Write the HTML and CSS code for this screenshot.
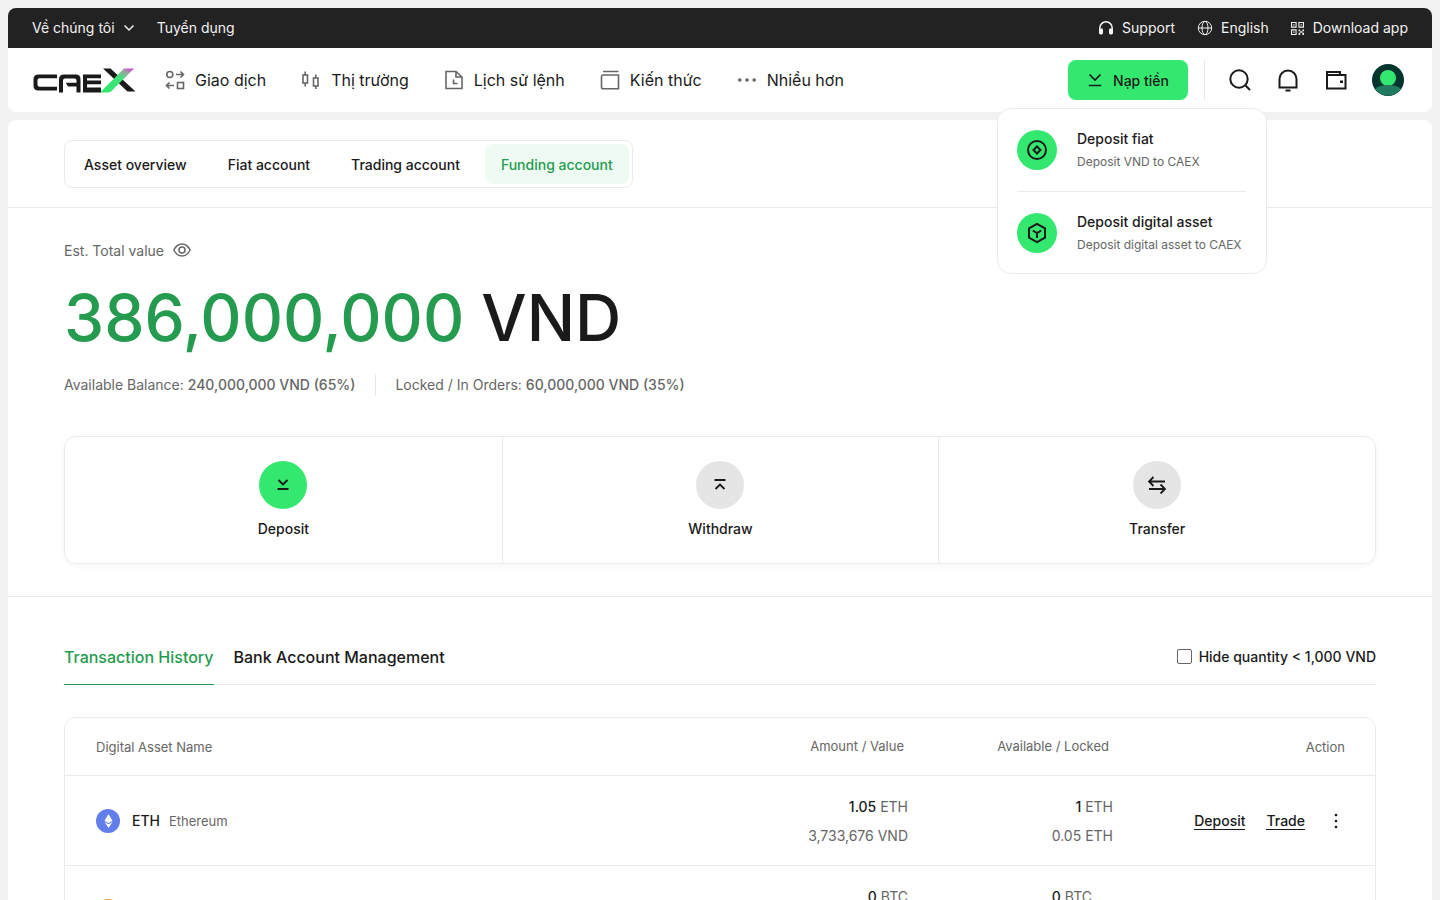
FILE: index.html
```html
<!DOCTYPE html>
<html lang="en">
<head>
    <meta charset="UTF-8">
    <meta name="viewport" content="width=device-width, initial-scale=1.0">
    <title>CAEX - Funding account</title>
    <link rel="stylesheet" href="styles.css">
</head>
<body>
    <header class="site-header">
        <div class="topbar">
            <div class="topbar-group">
                <a class="topbar-link">Về chúng tôi
                    <svg class="chevron" viewBox="0 0 12 12"><path d="M1.5 3.5 6 8l4.5-4.5"/></svg>
                </a>
                <a class="topbar-link">Tuyển dụng</a>
            </div>
            <div class="topbar-group">
                <a class="topbar-link">
                    <svg class="topbar-icon" viewBox="0 0 16 16"><path class="line" d="M1.8 10V8a6.2 6.2 0 0 1 12.4 0v2"/><rect class="solid" x="1" y="8.5" width="4" height="6" rx="1.4"/><rect class="solid" x="11" y="8.5" width="4" height="6" rx="1.4"/></svg>
                    Support
                </a>
                <a class="topbar-link">
                    <svg class="topbar-icon" viewBox="0 0 16 16"><circle class="line-thin" cx="8" cy="8" r="6.7"/><ellipse class="line-thin" cx="8" cy="8" rx="3" ry="6.7"/><path class="line-thin" d="M1.3 8h13.4"/></svg>
                    English
                </a>
                <a class="topbar-link">
                    <svg class="topbar-icon small" viewBox="0 0 12 12"><path class="line-thin" d="M.5.5h4.2v4.2H.5zM7.3.5h4.2v4.2H7.3zM.5 7.3h4.2v4.2H.5z"/><path class="solid" d="M2 2h1.2v1.2H2zM8.8 2H10v1.2H8.8zM2 8.800h1.200V10H2zM7 7h1.500v1.500H7zM10.500 7H12v1.500h-1.500zM8.500 8.500H10.500V10H8.500zM7 10h1.500v2H7zM10.500 10H12v2h-1.500z"/></svg>
                    Download app
                </a>
            </div>
        </div>
        <nav class="navbar">
            <svg class="logo" viewBox="0 0 104 24">
                <defs>
                    <linearGradient id="logoGrad" x1="0" y1="1" x2="1" y2="0">
                        <stop offset="0" stop-color="#2fe86e"/>
                        <stop offset="0.6" stop-color="#3fe37a"/>
                        <stop offset="0.8" stop-color="#9aa59f"/>
                        <stop offset="1" stop-color="#e02bea"/>
                    </linearGradient>
                </defs>
                <path class="logo-dark" d="M25 6H6.500Q1.500 6 1.500 11v6q0 5 5 5H25v-3.800H7.500q-2 0-2-2v-4.400q0-2 2-2H25zM27 24V11q0-5 5-5h12q4.500 0 4.500 5v13h-4V18H36l-2.200-3.800H44.500V12q0-2-2-2H33q-2 0-2 2v12zM51 6h18v3.800H55V12h14v3.800H55V19h14v5H51z"/>
                <path class="logo-dark" d="M72 1h7.500l25 23h-8z" transform="translate(-1 -1)"/>
                <path fill="url(#logoGrad)" d="M68 24l11-11c2-2 3.500-3 5-5l8-8h10L84 18c-3 3-5 6-8 6z"/>
            </svg>
            <div class="nav-items">
                <a class="nav-item">
                    <svg class="nav-icon" viewBox="0 0 20 20"><circle cx="4.800" cy="4.500" r="3"/><path d="M11 4.500h7.500M15.500 1.500l3 3-3 3M9 15.500H1.500M4.500 12.500l-3 3 3 3"/><rect x="12.500" y="12.500" width="6" height="6"/></svg>
                    Giao dịch
                </a>
                <a class="nav-item">
                    <svg class="nav-icon" viewBox="0 0 20 20"><rect x="2" y="5" width="4.500" height="8"/><rect x="12.500" y="8" width="4.500" height="8"/><path d="M4.200 1.500V5M4.200 13v3.500M14.800 4.500V8M14.800 16v3"/></svg>
                    Thị trường
                </a>
                <a class="nav-item">
                    <svg class="nav-icon" viewBox="0 0 20 20"><path d="M2 1.500h10l6 5.500v11.500H2zM12 1.500V7h6M9.500 9.500v4h4"/></svg>
                    Lịch sử lệnh
                </a>
                <a class="nav-item">
                    <svg class="nav-icon" viewBox="0 0 20 20"><path d="M3 1.500h15.500M1.500 6.500v10.500q0 1.800 1.800 1.800H18.500V5H3.200q-1.700 0-1.700 1.500z"/></svg>
                    Kiến thức
                </a>
                <a class="nav-item">
                    <svg class="nav-icon" viewBox="0 0 20 20"><circle class="dot" cx="2.800" cy="10" r="1.800"/><circle class="dot" cx="10" cy="10" r="1.800"/><circle class="dot" cx="17.200" cy="10" r="1.800"/></svg>
                    Nhiều hơn
                </a>
            </div>
            <div class="nav-right">
                <button class="deposit-btn">
                    <svg viewBox="0 0 16 16"><path d="M2.500 2.500 8 8l5.500-5.500M1.800 13.500h12.400"/></svg>
                    Nạp tiền
                </button>
                <span class="nav-divider"></span>
                <div class="nav-tools">
                    <svg class="tool-icon" viewBox="0 0 24 24"><circle cx="11" cy="11" r="8.700"/><path d="M17.500 17.500 22 22"/></svg>
                    <svg class="tool-icon" viewBox="0 0 24 24"><path d="M3.500 19.500h17V11a8.500 8.500 0 0 0-17 0zM9.500 22.500h5" /></svg>
                    <svg class="tool-icon" viewBox="0 0 24 24"><path d="M3 7V4h13v3M3 7h18.500v13.500H3zM3 7V4"/><path class="tool-solid" d="M16 12.500h3V15h-3z"/></svg>
                    <svg class="avatar" viewBox="0 0 32 32"><circle cx="16" cy="16" r="16" fill="#02352e"/><circle cx="16" cy="14" r="8" fill="#34e76f"/><path d="M3 25q4-4 13-4t13 4a16 16 0 0 1-26 0z" fill="#217a60"/></svg>
                </div>
            </div>
        </nav>
        <div class="deposit-menu">
            <div class="menu-item">
                <span class="menu-icon">
                    <svg viewBox="0 0 24 24"><circle cx="12" cy="12" r="9"/><path d="M12 8.500l3.500 3.500-3.500 3.500L8.500 12z"/></svg>
                </span>
                <div>
                    <div class="menu-title">Deposit fiat</div>
                    <div class="menu-sub">Deposit VND to CAEX</div>
                </div>
            </div>
            <div class="menu-item">
                <span class="menu-icon">
                    <svg viewBox="0 0 24 24"><path d="M12 2.800l8 4.600v9.200l-8 4.600-8-4.600V7.400zM7.800 9.500 12 12l4.200-2.500M12 12v5"/></svg>
                </span>
                <div>
                    <div class="menu-title">Deposit digital asset</div>
                    <div class="menu-sub">Deposit digital asset to CAEX</div>
                </div>
            </div>
        </div>
    </header>

    <main class="content">
        <section class="account-tabs-wrap">
            <div class="account-tabs">
                <a class="account-tab">Asset overview</a>
                <a class="account-tab">Fiat account</a>
                <a class="account-tab">Trading account</a>
                <a class="account-tab active">Funding account</a>
            </div>
        </section>

        <section class="summary">
            <div class="est-label">Est. Total value
                <svg viewBox="0 0 18 18"><path d="M.8 9C2.800 5.200 5.500 3 9 3s6.200 2.200 8.200 6c-2 3.800-4.700 6-8.200 6S2.800 12.800.8 9z"/><circle cx="9" cy="9" r="3"/></svg>
            </div>
            <div class="total"><span class="total-num">386,000,000</span> VND</div>
            <div class="balances">
                <span class="balance">Available Balance: <b>240,000,000 VND (65%)</b></span>
                <span class="balance">Locked / In Orders: <b>60,000,000 VND (35%)</b></span>
            </div>
            <div class="actions">
                <a class="action">
                    <span class="action-circle green"><svg viewBox="0 0 16 16"><path d="M3.500 3 8 7.500 12.500 3M2.500 12h11"/></svg></span>
                    Deposit
                </a>
                <a class="action">
                    <span class="action-circle"><svg viewBox="0 0 16 16"><path d="M2.500 3h11M3.500 12 8 7.500l4.500 4.500"/></svg></span>
                    Withdraw
                </a>
                <a class="action">
                    <span class="action-circle"><svg class="wide" viewBox="0 0 20 20"><path d="M2 6.500h16M6.500 2 2 6.500 6.500 11M18 14H2M13.500 9.500 18 14l-4.500 4.500"/></svg></span>
                    Transfer
                </a>
            </div>
        </section>

        <section class="assets">
            <div class="asset-tabs">
                <a class="asset-tab active">Transaction History</a>
                <a class="asset-tab">Bank Account Management</a>
                <label class="hide-small"><span class="checkbox"></span>Hide quantity &lt; 1,000 VND</label>
            </div>
            <div class="asset-table">
                <div class="table-row table-head">
                    <span>Digital Asset Name</span>
                    <span class="cell-num">Amount / Value</span>
                    <span class="cell-num">Available / Locked</span>
                    <span class="cell-action">Action</span>
                </div>
                <div class="table-row">
                    <div class="asset-name">
                        <span class="coin eth">
                            <svg viewBox="0 0 10 16"><path d="M5 0l4.500 7.800L5 10.500.5 7.800z"/><path d="M5 11.800l4.500-2.700L5 16 .5 9.100z"/></svg>
                        </span>
                        <b>ETH</b><span class="asset-full">Ethereum</span>
                    </div>
                    <div class="cell-num"><p><b>1.05</b> ETH</p><p>3,733,676 VND</p></div>
                    <div class="cell-num"><p><b>1</b> ETH</p><p>0.05 ETH</p></div>
                    <div class="row-actions">
                        <a>Deposit</a>
                        <a>Trade</a>
                        <svg class="kebab" viewBox="0 0 4 16"><circle cx="2" cy="2" r="1.300"/><circle cx="2" cy="8" r="1.300"/><circle cx="2" cy="14" r="1.300"/></svg>
                    </div>
                </div>
                <div class="table-row">
                    <div class="asset-name">
                        <span class="coin btc"></span>
                        <b>BTC</b><span class="asset-full">Bitcoin</span>
                    </div>
                    <div class="cell-num"><p><b>0</b> BTC</p><p>0 VND</p></div>
                    <div class="cell-num shifted"><p><b>0</b> BTC</p><p>0 BTC</p></div>
                    <div class="row-actions">
                        <a>Deposit</a>
                        <a>Trade</a>
                        <svg class="kebab" viewBox="0 0 4 16"><circle cx="2" cy="2" r="1.300"/><circle cx="2" cy="8" r="1.300"/><circle cx="2" cy="14" r="1.300"/></svg>
                    </div>
                </div>
            </div>
        </section>
    </main>
</body>
</html>
```

FILE: styles.css
```css
* {
    box-sizing: border-box;
}
html, body {
    height: 900px;
    overflow: hidden;
}
body {
    margin: 0;
    padding: 8px 8px 0;
    background-color: #f2f2f2;
    color: #1a1a1a;
    font-family: Inter, "Noto Sans", sans-serif;
    font-size: 14px;
}
p {
    margin: 0;
}
b {
    font-weight: 500;
}

/* header */
.site-header {
    position: relative;
}
.topbar {
    height: 40px;
    padding: 0 24px;
    display: flex;
    justify-content: space-between;
    align-items: center;
    background-color: #222;
    border-radius: 8px 8px 0 0;
    color: #f2f2f2;
}
.topbar-group {
    display: flex;
    gap: 22px;
}
.topbar-link {
    display: flex;
    align-items: center;
    gap: 8px;
    line-height: 20px;
}
.chevron {
    width: 12px;
    height: 12px;
    fill: none;
    stroke: #f2f2f2;
    stroke-width: 1.5;
}
.topbar-icon {
    width: 16px;
    height: 16px;
}
.topbar-icon.small {
    width: 13px;
    height: 13px;
    margin-right: 1px;
}
.line, .line-thin {
    fill: none;
    stroke: #f2f2f2;
    stroke-width: 1.500;
}
.line-thin {
    stroke-width: 1;
}
.solid {
    fill: #f2f2f2;
}
.navbar {
    height: 64px;
    padding: 0 28px 0 24px;
    display: flex;
    align-items: center;
    background-color: #fff;
    border-radius: 0 0 8px 8px;
}
.logo {
    width: 104px;
    height: 25px;
    flex: none;
}
.logo-dark {
    fill: #1a1a1a;
}
.nav-items {
    margin-left: 29px;
    display: flex;
    gap: 35px;
}
.nav-item {
    display: flex;
    align-items: center;
    gap: 10px;
    font-size: 16px;
    line-height: 24px;
}
.nav-icon {
    width: 20px;
    height: 20px;
    fill: none;
    stroke: #666;
    stroke-width: 1.600;
}
.nav-icon .dot {
    fill: #666;
    stroke: none;
}
.nav-right {
    margin-left: auto;
    display: flex;
    align-items: center;
}
.deposit-btn {
    width: 120px;
    height: 40px;
    display: flex;
    justify-content: center;
    align-items: center;
    gap: 10px;
    border: none;
    border-radius: 8px;
    background-color: #34e76f;
    color: #1a1a1a;
    font-family: inherit;
    font-size: 14px;
    font-weight: 500;
}
.deposit-btn svg {
    width: 16px;
    height: 16px;
    fill: none;
    stroke: #1a1a1a;
    stroke-width: 1.700;
}
.nav-divider {
    width: 1px;
    height: 40px;
    margin: 0 23px 0 16px;
    background-color: #e6e6e6;
}
.nav-tools {
    display: flex;
    align-items: center;
    gap: 24px;
}
.tool-icon {
    width: 24px;
    height: 24px;
    fill: none;
    stroke: #1a1a1a;
    stroke-width: 2;
}
.tool-icon .tool-solid {
    fill: #1a1a1a;
    stroke: none;
}
.avatar {
    width: 32px;
    height: 32px;
    margin-left: 0;
}

/* deposit dropdown */
.deposit-menu {
    position: absolute;
    top: 100px;
    left: 989px;
    width: 270px;
    height: 166px;
    padding: 0 20px 0 19px;
    background-color: #fff;
    border: 1px solid #ebebeb;
    border-radius: 14px;
    z-index: 10;
}
.menu-item {
    height: 82px;
    display: flex;
    align-items: center;
    gap: 20px;
}
.menu-item + .menu-item {
    border-top: 1px solid #ebebeb;
}
.menu-icon {
    width: 40px;
    height: 40px;
    flex: none;
    display: flex;
    justify-content: center;
    align-items: center;
    border-radius: 50%;
    background-color: #34e76f;
}
.menu-icon svg {
    width: 24px;
    height: 24px;
    fill: none;
    stroke: #1a1a1a;
    stroke-width: 2;
}
.menu-title {
    font-weight: 500;
    line-height: 20px;
}
.menu-sub {
    margin-top: 4px;
    font-size: 12px;
    line-height: 18px;
    color: #666;
}

/* main */
.content {
    margin-top: 8px;
    height: 800px;
    background-color: #fff;
    border-radius: 8px 8px 0 0;
}
.account-tabs-wrap {
    padding: 20px 56px 19px;
    border-bottom: 1px solid #ebebeb;
}
.account-tabs {
    width: max-content;
    height: 48px;
    padding: 3px;
    display: flex;
    align-items: center;
    gap: 9px;
    border: 1px solid #ebebeb;
    border-radius: 8px;
}
.account-tab {
    height: 40px;
    padding: 0 16px;
    display: flex;
    align-items: center;
    font-weight: 500;
    border-radius: 8px;
}
.account-tab.active {
    background-color: #eefbf2;
    color: #259b4f;
}
.summary {
    padding: 32px 56px;
    border-bottom: 1px solid #ebebeb;
}
.est-label {
    display: flex;
    align-items: center;
    gap: 9px;
    height: 20px;
    color: #666;
}
.est-label svg {
    width: 18px;
    height: 18px;
    fill: none;
    stroke: #666;
    stroke-width: 1.500;
}
.total {
    margin-top: 26px;
    font-size: 64px;
    line-height: 64px;
    font-weight: 500;
    color: #1a1a1a;
}
.total-num {
    color: #259b4f;
}
.balances {
    margin-top: 24px;
    display: flex;
    align-items: center;
}
.balance {
    line-height: 22px;
    color: #666;
}
.balance + .balance {
    margin-left: 20px;
    padding-left: 19px;
    border-left: 1px solid #e6e6e6;
}
.actions {
    margin-top: 40px;
    height: 128px;
    display: grid;
    grid-template-columns: repeat(3, 1fr);
    border: 1px solid #ebebeb;
    border-radius: 12px;
    box-shadow: 0 2px 6px rgba(0, 0, 0, 0.04);
}
.action {
    padding-top: 24px;
    display: flex;
    flex-direction: column;
    align-items: center;
    gap: 10px;
    font-weight: 500;
    line-height: 20px;
}
.action + .action {
    border-left: 1px solid #ebebeb;
}
.action-circle {
    width: 48px;
    height: 48px;
    display: flex;
    justify-content: center;
    align-items: center;
    border-radius: 50%;
    background-color: #e5e5e5;
}
.action-circle.green {
    background-color: #34e76f;
}
.action-circle svg {
    width: 16px;
    height: 16px;
    fill: none;
    stroke: #1a1a1a;
    stroke-width: 1.800;
}
.action-circle svg.wide {
    width: 20px;
    height: 20px;
}

/* assets */
.assets {
    padding: 32px 56px 0;
}
.asset-tabs {
    height: 56px;
    display: flex;
    align-items: stretch;
    gap: 20px;
    border-bottom: 1px solid #ebebeb;
}
.asset-tab {
    display: flex;
    align-items: center;
    font-size: 16px;
    font-weight: 500;
    margin-bottom: -1px;
}
.asset-tab.active {
    color: #259b4f;
    border-bottom: 1px solid #259b4f;
}
.hide-small {
    margin-left: auto;
    display: flex;
    align-items: center;
    gap: 7px;
    font-weight: 500;
}
.checkbox {
    width: 15px;
    height: 15px;
    border: 1.500px solid #666;
    border-radius: 2px;
}
.asset-table {
    margin-top: 32px;
    border: 1px solid #ebebeb;
    border-radius: 12px;
}
.table-row {
    height: 90px;
    padding: 0 30px 0 31px;
    display: grid;
    grid-template-columns: 1fr 205px 232px;
    grid-template-columns: 1fr 205px 205px 232px;
    align-items: center;
    border-top: 1px solid #ebebeb;
}
.table-head {
    height: 57px;
    border-top: none;
    font-size: 13px;
    color: #666;
}
.table-head .cell-num {
    padding-right: 4px;
}
.cell-num {
    text-align: right;
    color: #666;
    line-height: 29px;
}
.cell-num b {
    color: #1a1a1a;
}
.cell-num.shifted {
    padding-right: 21px;
}
.cell-action {
    text-align: right;
}
.asset-name {
    display: flex;
    align-items: center;
}
.asset-name b {
    margin-left: 12px;
}
.asset-full {
    margin-left: 9px;
    font-size: 13px;
    color: #666;
}
.coin {
    width: 24px;
    height: 24px;
    display: flex;
    justify-content: center;
    align-items: center;
    border-radius: 50%;
}
.coin svg {
    width: 9px;
    height: 14px;
    fill: #fff;
}
.coin.eth {
    background-color: #627eea;
}
.coin.btc {
    background-color: #f7931a;
}
.row-actions {
    display: flex;
    justify-content: flex-end;
    align-items: center;
    gap: 21px;
    font-weight: 500;
}
.row-actions a {
    line-height: 17px;
    border-bottom: 1px solid #1a1a1a;
}
.kebab {
    width: 4px;
    height: 16px;
    margin: 0 7px 0 8px;
    fill: #1a1a1a;
}
```
